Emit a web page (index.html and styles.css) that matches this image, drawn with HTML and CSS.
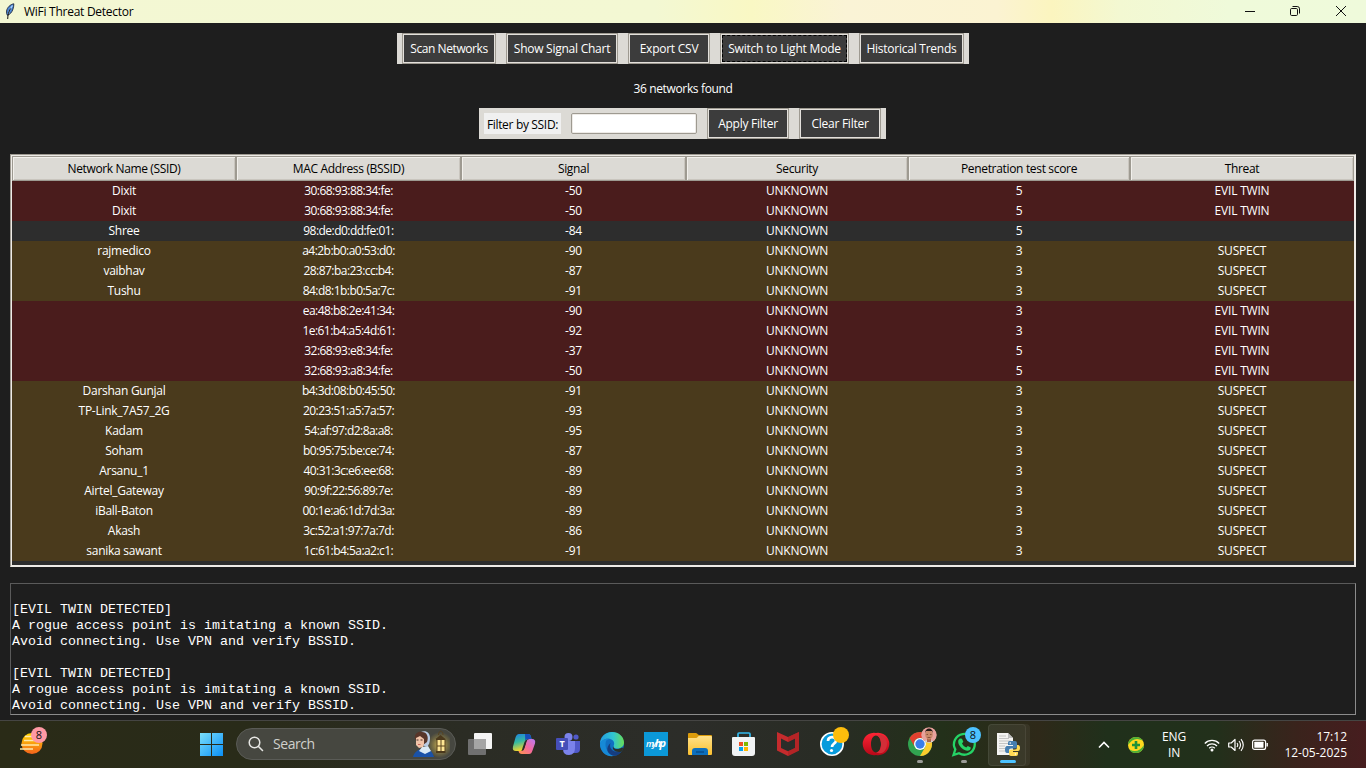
FILE: index.html
```html
<!DOCTYPE html>
<html lang="en">
<head>
<meta charset="utf-8">
<title>WiFi Threat Detector</title>
<link rel="stylesheet" href="styles.css">
</head>
<body>
<header class="titlebar">
  <svg class="feather" width="10" height="17" viewBox="0 0 10 17"><path d="M8.800.8C5.500 1.300 2 4.500 1.600 8c-.2 1.900.1 3.200.8 4.300 2.300-.8 4.600-2.800 5.600-6.300C8.600 4 8.900 2.300 8.800.8Z" fill="#4c86d6" stroke="#20283a" stroke-width=".9"/><path d="M7.500 2.500C5.500 5 4 8 3.300 11" stroke="#b9dcff" stroke-width="1.200" fill="none"/><path d="M5.500 5.500C3.800 8.500 2.700 12 2.700 16" stroke="#111" stroke-width="1" fill="none"/></svg>
  <span class="title">WiFi Threat Detector</span>
  <div class="controls">
    <svg width="12" height="12" viewBox="0 0 12 12"><path d="M1 6.500h10" stroke="#111" fill="none"/></svg>
    <svg width="12" height="12" viewBox="0 0 12 12"><rect x="1.500" y="3.500" width="7" height="7" rx="1.200" fill="none" stroke="#111"/><path d="M3.500 1.500h4.700q2.300 0 2.300 2.300V8.500" stroke="#111" fill="none"/></svg>
    <svg width="12" height="12" viewBox="0 0 12 12"><path d="M1 1l10 10M11 1L1 11" stroke="#111" fill="none"/></svg>
  </div>
</header>
<main class="app">
  <div class="toolbar">
    <button class="btn w94 tight">Scan Networks</button>
    <button class="btn w112">Show Signal Chart</button>
    <button class="btn w82">Export CSV</button>
    <button class="btn w129 focused">Switch to Light Mode</button>
    <button class="btn w105">Historical Trends</button>
  </div>
  <div class="status">36 networks found</div>
  <div class="filterbar">
    <label class="flabel">Filter by SSID:</label>
    <div class="entry"></div>
    <button class="btn w82">Apply Filter</button>
    <button class="btn w82">Clear Filter</button>
  </div>
  <div class="tree">
    <div class="row head"><span>Network Name (SSID)</span><span>MAC Address (BSSID)</span><span>Signal</span><span>Security</span><span>Penetration test score</span><span>Threat</span></div>
    <div class="row evil"><span>Dixit</span><span class="mac">30:68:93:88:34:fe:</span><span>-50</span><span>UNKNOWN</span><span>5</span><span>EVIL TWIN</span></div>
    <div class="row evil"><span>Dixit</span><span class="mac">30:68:93:88:34:fe:</span><span>-50</span><span>UNKNOWN</span><span>5</span><span>EVIL TWIN</span></div>
    <div class="row"><span>Shree</span><span class="mac">98:de:d0:dd:fe:01:</span><span>-84</span><span>UNKNOWN</span><span>5</span><span></span></div>
    <div class="row suspect"><span>rajmedico</span><span class="mac">a4:2b:b0:a0:53:d0:</span><span>-90</span><span>UNKNOWN</span><span>3</span><span>SUSPECT</span></div>
    <div class="row suspect"><span>vaibhav</span><span class="mac">28:87:ba:23:cc:b4:</span><span>-87</span><span>UNKNOWN</span><span>3</span><span>SUSPECT</span></div>
    <div class="row suspect"><span>Tushu</span><span class="mac">84:d8:1b:b0:5a:7c:</span><span>-91</span><span>UNKNOWN</span><span>3</span><span>SUSPECT</span></div>
    <div class="row evil"><span></span><span class="mac">ea:48:b8:2e:41:34:</span><span>-90</span><span>UNKNOWN</span><span>3</span><span>EVIL TWIN</span></div>
    <div class="row evil"><span></span><span class="mac">1e:61:b4:a5:4d:61:</span><span>-92</span><span>UNKNOWN</span><span>3</span><span>EVIL TWIN</span></div>
    <div class="row evil"><span></span><span class="mac">32:68:93:e8:34:fe:</span><span>-37</span><span>UNKNOWN</span><span>5</span><span>EVIL TWIN</span></div>
    <div class="row evil"><span></span><span class="mac">32:68:93:a8:34:fe:</span><span>-50</span><span>UNKNOWN</span><span>5</span><span>EVIL TWIN</span></div>
    <div class="row suspect"><span class="tight">Darshan Gunjal</span><span class="mac">b4:3d:08:b0:45:50:</span><span>-91</span><span>UNKNOWN</span><span>3</span><span>SUSPECT</span></div>
    <div class="row suspect"><span>TP-Link_7A57_2G</span><span class="mac">20:23:51:a5:7a:57:</span><span>-93</span><span>UNKNOWN</span><span>3</span><span>SUSPECT</span></div>
    <div class="row suspect"><span>Kadam</span><span class="mac">54:af:97:d2:8a:a8:</span><span>-95</span><span>UNKNOWN</span><span>3</span><span>SUSPECT</span></div>
    <div class="row suspect"><span>Soham</span><span class="mac">b0:95:75:be:ce:74:</span><span>-87</span><span>UNKNOWN</span><span>3</span><span>SUSPECT</span></div>
    <div class="row suspect"><span>Arsanu_1</span><span class="mac">40:31:3c:e6:ee:68:</span><span>-89</span><span>UNKNOWN</span><span>3</span><span>SUSPECT</span></div>
    <div class="row suspect"><span>Airtel_Gateway</span><span class="mac">90:9f:22:56:89:7e:</span><span>-89</span><span>UNKNOWN</span><span>3</span><span>SUSPECT</span></div>
    <div class="row suspect"><span>iBall-Baton</span><span class="mac">00:1e:a6:1d:7d:3a:</span><span>-89</span><span>UNKNOWN</span><span>3</span><span>SUSPECT</span></div>
    <div class="row suspect"><span>Akash</span><span class="mac">3c:52:a1:97:7a:7d:</span><span>-86</span><span>UNKNOWN</span><span>3</span><span>SUSPECT</span></div>
    <div class="row suspect"><span class="tight">sanika sawant</span><span class="mac">1c:61:b4:5a:a2:c1:</span><span>-91</span><span>UNKNOWN</span><span>3</span><span>SUSPECT</span></div>
  </div>
  <pre class="log">
&nbsp;
[EVIL TWIN DETECTED]
A rogue access point is imitating a known SSID.
Avoid connecting. Use VPN and verify BSSID.

[EVIL TWIN DETECTED]
A rogue access point is imitating a known SSID.
Avoid connecting. Use VPN and verify BSSID.</pre>
</main>
<footer class="taskbar">
  <div class="widgets">
    <svg width="34" height="47" viewBox="0 0 34 47"><defs><linearGradient id="sun" x2="0" y2="1"><stop stop-color="#ffd900"/><stop offset="1" stop-color="#f4621c"/></linearGradient></defs><circle cx="18" cy="22.500" r="10.500" fill="url(#sun)"/><path d="M11 15.500h10M10 19.500h19M7 24h18M6 28h13" stroke="#ffe8a8" stroke-width="1.500"/></svg>
    <span class="badge pink">8</span>
  </div>
  <div class="tasks">
    <svg class="ti" viewBox="0 0 44 47"><defs><linearGradient id="win" x2="1" y2="1"><stop stop-color="#7be0fc"/><stop offset="1" stop-color="#0a8ff6"/></linearGradient></defs><path d="M11 12h11v11H11zM23 12h11v11H23zM11 24h11v11H11zM23 24h11v11H23z" fill="url(#win)"/></svg>
    <div class="search">
      <svg width="16" height="16" viewBox="0 0 16 16"><circle cx="6.500" cy="6.500" r="5.300" fill="none" stroke="#e6e6e3" stroke-width="1.500"/><path d="M10.500 10.500l4 4" stroke="#e6e6e3" stroke-width="1.600" stroke-linecap="round"/></svg>
      <span class="stext">Search</span>
      <svg class="nurse" width="38" height="28" viewBox="0 0 38 28">
        <defs><radialGradient id="glow"><stop stop-color="#f5d35c" stop-opacity=".8"/><stop offset="1" stop-color="#c8ab40" stop-opacity="0"/></radialGradient></defs>
        <circle cx="28" cy="15" r="13" fill="url(#glow)"/>
        <path d="M1 27c1-4 4-7 8-8l5-2c4 2 7 6 8 10Z" fill="#1a52a8"/>
        <path d="M7 21l3-4 6-1 3 5-6 3Z" fill="#d9e9f5"/>
        <path d="M9 2c5-2 9 1 9 6 0 4-1 7-3 9l-5-2Z" fill="#b9cbe3"/>
        <path d="M3 9C2 3 7 1 10 2c5 0 7 5 5 10l-4 3Z" fill="#573529"/>
        <path d="M4 8l4-2 4 3v5l-1 3-4 1-3-3Z" fill="#f0c3a8"/>
        <path d="M4.500 10h2M8.500 10h2" stroke="#4a2d29" stroke-width="1"/><path d="M6 14.500h2.500" stroke="#c9645a"/>
        <path d="M23.500 9l5-4 5 4zM24 9h9.500v1H24zM24 21h9.500v2H24z" fill="#4b391d"/>
        <path d="M25 10h8v11h-8z" fill="#ffe694"/>
        <path d="M25 10v11M29 10v11M33 10v11M25 16h8" stroke="#58431f"/>
        <path d="M26.500 5c0-5 4.500-5 4.500 0" stroke="#58431f" fill="none"/>
      </svg>
    </div>
    <svg class="ti" viewBox="0 0 44 47"><rect x="16" y="12" width="18" height="16" rx="1" fill="#f4f4f4"/><rect x="10" y="18" width="18" height="16" rx="1" fill="#707070"/><path d="M16 18h12v10H16z" fill="#a5a5a5"/></svg>
    <svg class="ti" viewBox="0 0 44 47"><defs><linearGradient id="c1" x2=".3" y2="1"><stop stop-color="#1d7ee4"/><stop offset=".5" stop-color="#35b9a0"/><stop offset="1" stop-color="#f6d52a"/></linearGradient><linearGradient id="c2" x1="1" x2="0" y2="1"><stop stop-color="#b77af5"/><stop offset=".5" stop-color="#f4689d"/><stop offset="1" stop-color="#ff9748"/></linearGradient></defs><path d="M17 13h9q2.500 0 3 3l.5 2h-3.500q-2 0-2.700 2.500L21 28q-.7 2-2.500 2H14q-4 0-3-4.500l2.500-9Q14.500 13 17 13Z" fill="url(#c1)"/><path d="M23 13h3q2.500 0 3 3l.5 2h-3.500q-2 0-2.700 2Z" fill="#164dbb"/><path d="M27 33h-7q-3 0-3.500-3h3q2 0 2.700-2.500l2.200-7q.7-2.500 3-2.500H30q4 0 3 4.500l-2.500 7Q29.500 33 27 33Z" fill="url(#c2)"/><path d="M20.500 27l2-6q.7-2 2.500-2l-2.500 8q-.5 2-3 2.500.7-.7 1-2.500Z" fill="#2b2d28"/></svg>
    <svg class="ti" viewBox="0 0 44 47"><circle cx="30" cy="16" r="2.600" fill="#5059c9"/><circle cx="22.500" cy="16" r="4" fill="#7b83eb"/><path d="M27 20h7v8q0 4-4 4h-3z" fill="#5059c9"/><path d="M17 20h12v7q0 7-6 7t-6-6Z" fill="#7b83eb"/><rect x="10" y="17" width="12" height="12" rx="1" fill="#464eb8"/><text x="16" y="26.300" class="glyph t">T</text></svg>
    <svg class="ti" viewBox="0 0 44 47"><defs><linearGradient id="e1"><stop stop-color="#239ce0"/><stop offset=".55" stop-color="#31c6d2"/><stop offset="1" stop-color="#68de55"/></linearGradient></defs><circle cx="22" cy="23" r="12" fill="#106fc2"/><path d="M10 23C10 16 15 11 22 11c7 0 12 5 12 10.500 0 4-3.500 6-7 6-3 0-4-1.500-3.200-3 .8-1.500.7-5.500-3.800-6.500-5-1-9 2-10 5Z" fill="url(#e1)"/><path d="M16 20c-2 7 2 13 9 14.700C17 37 10 31 10 23c1-4 6-6 10-5-2 0-3.500 1-4 2Z" fill="#1689d6"/><path d="M20.500 22c-2 6 3 10 11 8.500-3 4.500-7 4.500-9 4-6-2-7-8-2-12.500Z" fill="#153d80"/><path d="M23.500 24c-1 2 .5 4 3.500 4 2 0 4-.6 5.300-1.500l1 1.200-2 3c-6 1-10-2-7.800-6.700Z" fill="#2b3029"/></svg>
    <svg class="ti" viewBox="0 0 44 47"><rect x="10" y="11" width="24" height="24" fill="#0b98d8"/><text x="22" y="25.500" class="glyph hp" textLength="20"><tspan>my</tspan><tspan class="hpb">hp</tspan></text></svg>
    <svg class="ti" viewBox="0 0 44 47"><defs><linearGradient id="fo" x2="0" y2="1"><stop stop-color="#ffe18a"/><stop offset="1" stop-color="#fbc02f"/></linearGradient></defs><path d="M10 13q0-1 1-1h7q1 0 2 1.500l1 .5h12q1 0 1 1v8H10z" fill="#dc9c0b"/><path d="M10 17h8q1 0 2-1.500l1-.5h12q1 0 1 1v17q0 1-1 1H11q-1 0-1-1z" fill="url(#fo)"/><path d="M14 34v-4q0-3 3-3h10q3 0 3 3v4z" fill="#0d6fbd"/><path d="M18 31h8" stroke="#084c8b" stroke-width="1.500"/></svg>
    <svg class="ti" viewBox="0 0 44 47"><path d="M16 17v-4q0-1 1-1h10q1 0 1 1v4" fill="none" stroke="#32b9ee" stroke-width="1.700"/><path d="M10 17q0-1 1-1h21q1 0 1 1v15q0 3-3 3H13q-3 0-3-3z" fill="#f1f3f4"/><path d="M17 21h4v4h-4z" fill="#ef5024"/><path d="M22 21h4v4h-4z" fill="#7fba00"/><path d="M17 26h4v4h-4z" fill="#05a3ef"/><path d="M22 26h4v4h-4z" fill="#feb800"/></svg>
    <svg class="ti" viewBox="0 0 44 47"><path d="M11 11l11 5 11-5v18.500L22 35l-11-5.500z" fill="#c52b2d"/><path d="M15 17.500l7 3.500 7-3.500v9.500l-7 3.200-7-3.200z" fill="#2a2d29"/><path d="M22 16l11-5v18.500L22 35v-4.800l7-3.200v-9.500L22 21z" fill="#a92022" opacity=".6"/></svg>
    <div class="tw"><svg class="ti" viewBox="0 0 44 47"><circle cx="22" cy="23" r="11.200" fill="#079bdc" stroke="#fff" stroke-width="1.600"/><path d="M18 20c0-5 8-5 8-.5 0 3-4 3-4 6.500" fill="none" stroke="#fff" stroke-width="2.700"/><circle cx="21.500" cy="29.500" r="1.600" fill="#fff"/></svg><span class="badge yellow"></span></div>
    <svg class="ti" viewBox="0 0 44 47"><defs><linearGradient id="op" x2="0" y2="1"><stop stop-color="#ff2535"/><stop offset="1" stop-color="#b70818"/></linearGradient></defs><path fill-rule="evenodd" d="M22 12a11.200 11.200 0 1 0 0 22 11.200 11.200 0 1 0 0-22Zm0 2.500c3 0 5 4 5 8.500s-2 8.500-5 8.500-5-4-5-8.500 2-8.500 5-8.500Z" fill="url(#op)"/><path d="M22 14.500c3-1.200 5.500-.8 7 0a11 11 0 0 1 0 17c-1.500.8-4 1.200-7 0 3 0 5-4 5-8.500s-2-8.500-5-8.500Z" fill="#d32e38"/></svg>
    <div class="tw run"><svg class="ti" viewBox="0 0 44 47"><circle cx="22" cy="23" r="12" fill="#31a350"/><path d="M11.600 17A12 12 0 0 1 32.400 17H22a6 6 0 0 0-5.200 9Z" fill="#e3402f"/><path d="M32.400 17A12 12 0 0 1 22 35l5.200-9A6 6 0 0 0 22 17Z" fill="#fccd2d"/><circle cx="22" cy="23" r="6" fill="#fff"/><circle cx="22" cy="23" r="4.700" fill="#397eea"/></svg><svg class="badge" viewBox="0 0 16 16"><defs><clipPath id="av"><circle cx="8" cy="8" r="7.800"/></clipPath></defs><g clip-path="url(#av)"><path d="M0 0h16v16H0z" fill="#e8a29d"/><path d="M2 16c1-4 10-4 12 0z" fill="#cfd7d8"/><path d="M6 10h4v5H6z" fill="#a9674a"/><ellipse cx="8" cy="7.500" rx="3.800" ry="5" fill="#c98a6a"/><path d="M4 6c0-6 8-6 8 0l-1-2H5z" fill="#241917"/><path d="M5.500 7.500h1.500M9 7.500h1.500M6.500 10.500h3" stroke="#7a4434" stroke-width=".8"/></g></svg></div>
    <div class="tw run"><svg class="ti" viewBox="0 0 44 47"><path d="M11.500 34l1.800-5.600a10.400 10.400 0 1 1 3.700 3.800Z" fill="none" stroke="#25d366" stroke-width="2.300"/><path d="M18 17.500l2 .2 1.300 3-1.300 1.800c1 2 2.300 3.200 4.300 4.100l1.500-1.700 3 1.500c0 2.400-1.800 3.600-3.800 3.300-4.500-.7-9-5.500-8.800-9.200 0-1.300.7-2.500 1.800-3Z" fill="#25d366"/></svg><span class="badge blue">8</span></div>
    <div class="tw active"><svg class="ti" viewBox="0 0 44 47"><path d="M11 12h11l5 5v17H11z" fill="#f4f4f2"/><path d="M22 12v5h5" fill="#bbb"/><path d="M13 15h7M13 17.500h10M13 20h12M13 22.500h9M13 25h6M13 27.500h6M13 30h8" stroke="#aaa" stroke-width=".7"/><path d="M26.500 20h-3q-1.500 0-1.500 2v2h5v1h-6q-2 0-2 3.500t2 3.500h2v-2.500q0-2 2-2h4q2 0 2-2V22q0-2-2-2z" fill="#3976aa"/><path d="M27 35h3q2 0 2-2v-2h-5v-1h5q2 0 2-3t-2-3h-1v2q0 2.500-2 2.500h-4q-2 0-2 2V33q0 2 2 2z" fill="#ffd848"/><circle cx="24.200" cy="22" r=".8" fill="#fff"/><circle cx="29.500" cy="33" r=".8" fill="#fff"/></svg></div>
  </div>
  <div class="tray">
    <svg width="12" height="8" viewBox="0 0 12 8"><path d="M1 6.500l5-5 5 5" fill="none" stroke="#fff" stroke-width="1.600"/></svg>
    <svg class="plus" width="16" height="16" viewBox="0 0 16 16"><circle cx="8" cy="8" r="8" fill="#ffd91f"/><path d="M0 8A8 8 0 0 1 8 0Q13 0 14.500 3.500 6-1 0 8ZM16 8a8 8 0 0 1-8 8Q3 16 1.500 12.500 10 17 16 8Z" fill="#4bae37"/><path d="M8 4v8M4 8h8" stroke="#209239" stroke-width="2.600"/></svg>
    <div class="lang">ENG<br>IN</div>
    <svg class="wifi" width="16" height="16" viewBox="0 0 16 16"><path d="M.8 6.500a10 10 0 0 1 14.400 0M3 9a7 7 0 0 1 10 0M5.200 11.300a4 4 0 0 1 5.600 0" fill="none" stroke="#fff" stroke-width="1.300"/><circle cx="8" cy="13" r="1.500" fill="#fff"/></svg>
    <svg class="snd" width="16" height="16" viewBox="0 0 16 16"><path d="M.7 6h2.500L7 2.500v11L3.200 10H.7z" fill="none" stroke="#fff" stroke-width="1.200" stroke-linejoin="round"/><path d="M9 6q1.500 2 0 4M11 4q3 4 0 8M13 2.200q4.500 5.800 0 11.600" fill="none" stroke="#fff" stroke-width="1.100"/></svg>
    <svg class="bat" width="16" height="12" viewBox="0 0 16 12"><rect x=".6" y="1.100" width="13" height="9.300" rx="2" fill="none" stroke="#fff" stroke-width="1.200"/><rect x="2.300" y="2.800" width="9.200" height="6" rx=".5" fill="#fff"/><path d="M15.200 4v3.500" stroke="#fff" stroke-width="1.400"/></svg>
    <div class="clock">17:12<br>12-05-2025</div>
  </div>
</footer>
</body>
</html>
```
FILE: styles.css
```css
* { box-sizing: border-box; }
body { margin: 0; width: 1366px; height: 768px; overflow: hidden; display: flex; flex-direction: column; background: #1e1e1e; color: #fff; font: 12px/16px "Open Sans", "Noto Sans", sans-serif; letter-spacing: -0.2px; }
svg { display: block; flex: none; }
.titlebar { height: 23px; flex: none; display: flex; align-items: center; padding: 0 19px 0 5px; color: #000; background: linear-gradient(90deg, #f3f7d3 0, #f3f8d3 48%, #f9f8c4 55%, #faf3d6 62%, #fbf3d2 73%, #fbf5bf 77%, #f3f8d2 82%, #effada 90%, #effadb 100%); }
.feather { margin-top: -1px; }
.title { margin-left: 9px; letter-spacing: -0.27px; }
.controls { margin-left: auto; display: flex; gap: 33px; margin-top: -2px; padding-right: 0; }
.controls svg:last-child { margin-left: 1px; }
.app { flex: 1; display: flex; flex-direction: column; align-items: center; padding: 10px 10px 5px; }
.toolbar, .filterbar { display: flex; background: #dcdad5; height: 31px; padding: 0 5px; gap: 10px; flex: none; }
.btn { font: inherit; letter-spacing: -0.25px; color: #fff; background: #3c3c3c; border: 1px solid #9e9a91; box-shadow: inset 0 0 0 1px #e4e1dc; padding: 0; white-space: nowrap; text-align: center; flex: none; }
.w94 { width: 94px; } .w112 { width: 112px; } .w82 { width: 82px; } .w129 { width: 129px; } .w105 { width: 105px; }
.tight, .row .tight { letter-spacing: -0.42px; }
.focused { outline: 1px dashed #000; outline-offset: -3px; letter-spacing: -0.2px; }
.status { margin: 17px 0 11px; letter-spacing: -0.35px; }
.filterbar { align-items: center; margin-right: 1px; }
.filterbar .btn { height: 31px; }
.flabel { width: 77px; height: 21px; line-height: 21px; padding-top: 1px; text-align: center; background: #f0f0f0; color: #000; letter-spacing: -0.33px; }
.entry { width: 126px; height: 21px; background: #fff; border: 1px solid #9e9a91; border-radius: 2px; box-shadow: inset 0 0 0 1px #eeebe7; }
.tree { margin-top: 15px; width: 1346px; height: 413px; flex: none; background: #2d2d2d; border: 1px solid #eeebe7; border-top-color: #9e9a91; border-left-color: #9e9a91; box-shadow: inset 0 0 0 1px #eeebe7; padding: 1px; }
.row { display: grid; grid-template-columns: 224px 225px 225px 222px 222px 224px; height: 20px; line-height: 19px; text-align: center; }
.row span { white-space: nowrap; }
.row span:first-child { letter-spacing: -0.27px; }
.head { height: 25px; color: #000; line-height: 23px; letter-spacing: -0.33px; }
.row.head span:first-child { letter-spacing: -0.36px; }
.head span { background: #dcdad5; border: 1px solid #9e9a91; box-shadow: inset 1px 1px #f2f0ec, inset -1px -1px #c9c5be; }
.row .mac { letter-spacing: -0.54px; }
.evil { background: #4a1c1c; }
.suspect { background: #4a3a1c; }
.log { margin: 16px 0 0; width: 1346px; height: 132px; border: 1px solid #5a5a5a; border-bottom-color: #8c8c8c; border-right-color: #8c8c8c; padding: 2px 1px 0; font: 13.330px/16px "Liberation Mono", monospace; letter-spacing: 0; color: #fff; overflow: hidden; }
.taskbar { height: 48px; flex: none; display: flex; border-top: 1px solid #454543; background: linear-gradient(90deg, #2a2b17 0, #292b19 18%, #2b2c24 34%, #2c2d29 50%, #292c25 60%, #23301a 69%, #2e2919 76%, #20301b 81%, #22301b 89%, #3a231c 95%, #471d1f 100%); }
.widgets { width: 189px; padding-left: 14px; position: relative; }
.badge { position: absolute; left: 23px; top: 6px; width: 16px; height: 16px; border-radius: 50%; font-size: 11px; line-height: 16px; text-align: center; color: #111; letter-spacing: 0; }
.pink { left: 31px; background: #ff99a4; }
.yellow { background: #fdbd0c; }
.blue { background: #4cc2ff; }
.tasks { display: flex; }
.ti { width: 44px; height: 47px; }
.search { width: 220px; height: 32px; margin: 7px 2px 0 3px; border: 1px solid #5a5b56; border-radius: 16px; background: #464740; display: flex; align-items: center; padding-left: 11px; flex: none; }
.stext { margin-left: 9px; font-size: 14px; letter-spacing: -0.45px; color: #d0d0cc; }
.nurse { margin: 0 5px 0 auto; }
.tw { position: relative; width: 44px; }
.run::after, .active::after { content: ""; position: absolute; left: 19px; top: 39px; width: 6px; height: 3px; border-radius: 2px; background: #9b9c98; }
.active::after { left: 14px; width: 16px; background: #4cc2ff; }
.active::before { content: ""; position: absolute; left: 2px; top: 3px; width: 36px; height: 40px; border-radius: 4px; background: rgba(255,255,255,.07); border: 1px solid rgba(255,255,255,.07); box-shadow: 4px 0 0 rgba(255,255,255,.06); }
.glyph { fill: #fff; text-anchor: middle; font-family: "Open Sans", sans-serif; letter-spacing: 0; }
.t { font-size: 9px; font-weight: 700; }
.hp { font-size: 9px; font-style: italic; font-weight: 600; }
.hpb { font-size: 11px; font-weight: 700; }
.tray { margin-left: auto; display: flex; align-items: center; padding-right: 19px; }
.plus { margin-left: 18px; }
.lang { margin-left: 13px; width: 34px; text-align: center; }
.wifi { margin-left: 13px; }
.snd { margin-left: 8px; }
.bat { margin-left: 8px; }
.clock { width: 79px; text-align: right; letter-spacing: 0; }
```
